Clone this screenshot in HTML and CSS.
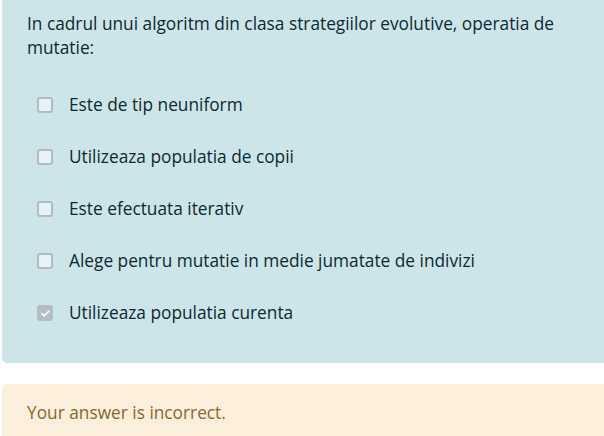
FILE: index.html
```html
<!DOCTYPE html>
<html lang="ro">
<head>
<meta charset="utf-8">
<link rel="stylesheet" href="styles.css">
</head>
<body>
<div class="formulation">
  <div class="qtext">In cadrul unui algoritm din clasa strategiilor evolutive, operatia de mutatie:</div>
  <div class="answers">
    <div class="opt"><span class="cb"></span><span class="lbl">Este de tip neuniform</span></div>
    <div class="opt"><span class="cb"></span><span class="lbl">Utilizeaza populatia de copii</span></div>
    <div class="opt"><span class="cb"></span><span class="lbl">Este efectuata iterativ</span></div>
    <div class="opt"><span class="cb"></span><span class="lbl">Alege pentru mutatie in medie jumatate de indivizi</span></div>
    <div class="opt"><span class="cb checked"><svg viewBox="0 0 16 16" width="11" height="11"><path d="M3 8.5l3 3 7-7" fill="none" stroke="#fff" stroke-width="2.2" stroke-linecap="round" stroke-linejoin="round"/></svg></span><span class="lbl">Utilizeaza populatia curenta</span></div>
  </div>
</div>
<div class="outcome">Your answer is incorrect.</div>
</body>
</html>
```
FILE: styles.css
```css
html, body {
  margin: 0;
  padding: 0;
  overflow: hidden;
  background: #fff;
}
body {
  font-family: "Open Sans", "Noto Sans", sans-serif;
  font-size: 17.3px;
  color: #0b2933;
}
.formulation {
  margin: -8px -10px 0 2px;
  padding: 20px 25px 24px 25px;
  background: #cde5e9;
  border-radius: 5px;
}
.qtext {
  line-height: 24px;
  padding-right: 20px;
}
.answers {
  margin-top: 19px;
}
.opt {
  display: flex;
  align-items: center;
  height: 52px;
}
.cb {
  flex: none;
  width: 16px;
  height: 16px;
  box-sizing: border-box;
  margin-left: 10px;
  margin-right: 16px;
  border: 2px solid #b2bbc2;
  border-radius: 3px;
  background: #e6f2f4;
  display: flex;
  align-items: center;
  justify-content: center;
}
.cb.checked {
  background: #b5bcc4;
  border-color: #b5bcc4;
}
.lbl {
  line-height: 24px;
}
.outcome {
  margin: 21px -10px 0 2px;
  padding: 17px 25px 11px;
  background: #fcefdc;
  color: #8e662e;
  border-radius: 5px 5px 0 0;
  line-height: 24px;
}
```
